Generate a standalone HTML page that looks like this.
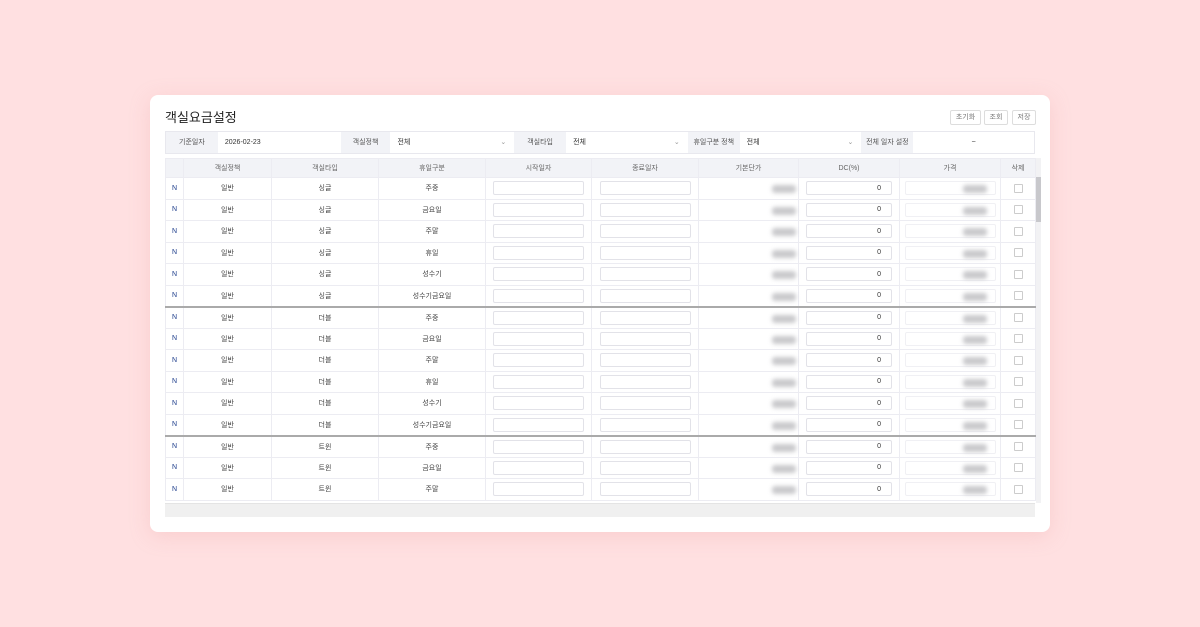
<!DOCTYPE html>
<html><head><meta charset="utf-8"><style>
*{box-sizing:border-box;margin:0;padding:0}
body{width:1200px;height:627px;background:#ffe0e1;font-family:"Liberation Sans","Noto Sans CJK KR",sans-serif;position:relative;overflow:hidden;color:#333}
.card{position:absolute;left:150px;top:95px;width:900px;height:437px;background:#fff;border-radius:8px;box-shadow:0 4px 20px rgba(230,150,150,.25)}
.title{position:absolute;left:165px;top:107px;font-size:13px;color:#222}
.btn{position:absolute;top:110px;height:15px;border:1px solid #ddd;border-radius:2px;font-size:7px;color:#777;text-align:center;line-height:13px;background:#fff}
.filter{position:absolute;left:165px;top:131px;width:870px;height:23px;border:1px solid #e8e8ee;display:flex;font-size:7px}
.filter div{height:21px;line-height:21px}
.lab{background:#f2f3f7;color:#555;text-align:center}
.val{background:#fff;padding-left:7px;color:#333;position:relative}
.chev{position:absolute;right:8px;top:0;color:#999;font-size:7px}
table{position:absolute;left:165px;top:158px;border-collapse:collapse;font-size:7px;table-layout:fixed;width:870px}
td,th{border:1px solid #ececf2;height:21.5px;text-align:center;font-weight:normal;color:#444;padding:0;vertical-align:middle}
th{background:#f2f3f7;color:#666;height:19px}
tr.sep td{border-top:2px solid #aaa}
.inp{display:block;margin:0 auto;width:91px;height:14px;border:1px solid #e2e2e8;border-radius:2px;background:#fff}
.dc{width:86px;display:flex;align-items:center;justify-content:flex-end;padding-right:10px;font-size:7px;color:#333}
.pr{position:relative;width:91px;border-color:#f0f0f4}
.blob{position:absolute;width:24px;height:8px;background:#c9c9cc;filter:blur(2px);border-radius:3px}
.cb{display:block;margin:0 auto;width:9px;height:9px;border:1px solid #ccc;border-radius:1px}
td.bp{position:relative}
.scroll{position:absolute;left:1036px;top:177px;width:5px;height:45px;background:#c8c8cc}
.scrolltrack{position:absolute;left:1036px;top:158px;width:5px;height:345px;background:#f2f2f4}
.hbar{position:absolute;left:165px;top:503px;width:870px;height:14px;background:#f0f0f0;border-top:1px solid #e4e4e4}
</style></head><body>
<div class="card"></div>
<div class="title">객실요금설정</div>
<div class="btn" style="left:950px;width:31px">초기화</div>
<div class="btn" style="left:984px;width:24px">조회</div>
<div class="btn" style="left:1012px;width:24px">저장</div>
<div class="filter">
<div class="lab" style="width:52px">기준일자</div>
<div class="val" style="width:123px">2026-02-23</div>
<div class="lab" style="width:50px">객실정책</div>
<div class="val" style="width:124px">전체<span class="chev">⌄</span></div>
<div class="lab" style="width:52px">객실타입</div>
<div class="val" style="width:122px">전체<span class="chev">⌄</span></div>
<div class="lab" style="width:52px">휴일구분 정책</div>
<div class="val" style="width:122px">전체<span class="chev">⌄</span></div>
<div class="lab" style="width:52px">전체 일자 설정</div>
<div class="val" style="width:121px;text-align:center;padding:0">~</div>
</div>
<div class="scrolltrack"></div><div class="scroll"></div>
<table>
<colgroup><col style="width:18px"><col style="width:88px"><col style="width:107px"><col style="width:107px"><col style="width:106px"><col style="width:107px"><col style="width:100px"><col style="width:101px"><col style="width:101px"><col style="width:35px"></colgroup>
<tr><th></th><th>객실정책</th><th>객실타입</th><th>휴일구분</th><th>시작일자</th><th>종료일자</th><th>기본단가</th><th>DC(%)</th><th>가격</th><th>삭제</th></tr>
<tbody id="tb"></tbody>
</table>
<div class="hbar"></div>
<script>
var types=["싱글","더블","트윈"],days=["주중","금요일","주말","휴일","성수기","성수기금요일"],h="";
for(var t=0;t<3;t++)for(var d=0;d<6;d++){if(t==2&&d>2)break;
h+='<tr'+(t>0&&d==0?' class="sep"':'')+'><td style="color:#1a3a8a">N</td><td>일반</td><td>'+types[t]+'</td><td>'+days[d]+'</td><td><span class="inp"></span></td><td><span class="inp"></span></td><td class="bp"><span class="blob" style="right:2px;top:7px"></span></td><td><span class="inp dc">0</span></td><td><span class="inp pr"><span class="blob" style="right:8px;top:3px"></span></span></td><td><span class="cb"></span></td></tr>';}
document.getElementById("tb").innerHTML=h;
</script>
</body></html>
